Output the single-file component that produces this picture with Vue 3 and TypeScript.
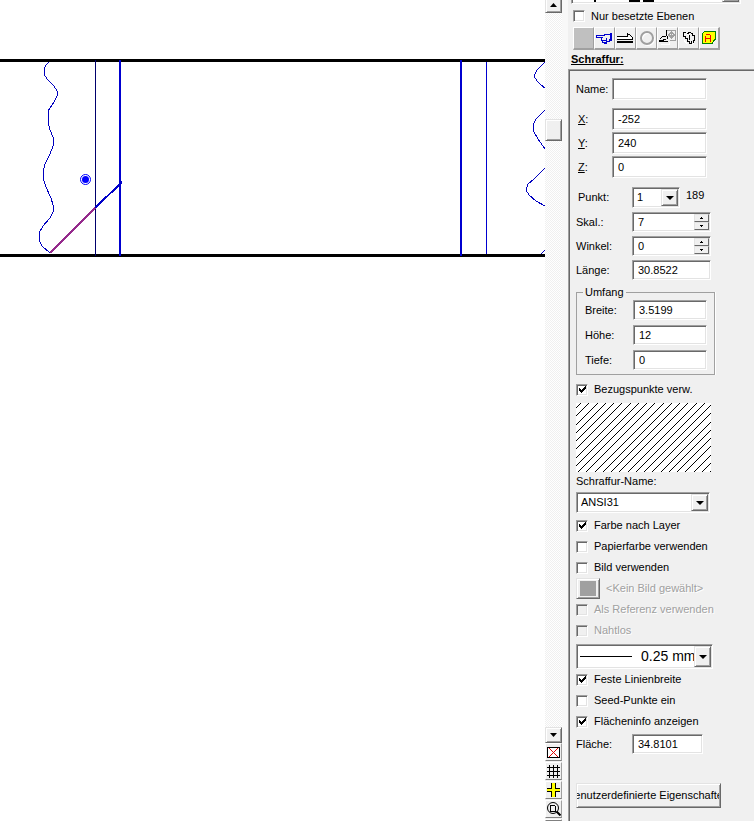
<script setup lang="ts">
import { reactive, ref } from 'vue'

interface Field { id: string; label: string; value: string }
interface Check { id: string; label: string; on: boolean; disabled?: boolean }

const name = ref('')
const coords = reactive<Field[]>([
  { id: 'x', label: 'X', value: '-252' },
  { id: 'y', label: 'Y', value: '240' },
  { id: 'z', label: 'Z', value: '0' },
])
const spins = reactive<Field[]>([
  { id: 'scale', label: 'Skal.:', value: '7' },
  { id: 'angle', label: 'Winkel:', value: '0' },
])
const extents = reactive<Field[]>([
  { id: 'width', label: 'Breite:', value: '3.5199' },
  { id: 'height', label: 'Höhe:', value: '12' },
  { id: 'depth', label: 'Tiefe:', value: '0' },
])
const length = ref('30.8522')
const area = ref('34.8101')
const onlyUsed = ref(false)
const useRefs = ref(true)
const fillChecks = reactive<Check[]>([
  { id: 'bylayer', label: 'Farbe nach Layer', on: true },
  { id: 'paper', label: 'Papierfarbe verwenden', on: false },
  { id: 'image', label: 'Bild verwenden', on: false },
])
const imageChecks = reactive<Check[]>([
  { id: 'asref', label: 'Als Referenz verwenden', on: false, disabled: true },
  { id: 'seamless', label: 'Nahtlos', on: false, disabled: true },
])
const lineChecks = reactive<Check[]>([
  { id: 'fixed', label: 'Feste Linienbreite', on: true },
  { id: 'seed', label: 'Seed-Punkte ein', on: false },
  { id: 'info', label: 'Flächeninfo anzeigen', on: true },
])

function step(field: Field, by: number) {
  field.value = String(Number(field.value) + by)
}

// 45° hatch strokes of the ANSI31 preview
const hatch = Array.from({ length: 26 }, (_, i) => Math.round(5 + i * 8.25))
</script>

<template>
  <div class="app">
    <main class="canvas">
      <svg class="drawing" aria-label="Zeichnung">
        <g shape-rendering="crispEdges" fill="none">
          <path d="M50 61L46 65L44 69V74L47 79L54 86L57 91V96L54 102L48 111V121L50 130L53 137V146L50 154L45 164L43 172V178L46 187L51 198L53 205V212L50 218L43 226L39 233V240L42 246L50 253" stroke="#0000c0" />
          <path d="M545 62L537 70L534 76L537 81L541 85L545 88M545 110L536 119L533 125L534 132L538 139L545 149M545 168L534 179L528 184L526 190L529 195L536 201L545 206M545 250L539 256" stroke="#0000c0" />
          <path d="M486.500 60V255" stroke="#0000d0" />
          <line x1="0" x2="100%" y1="60.500" y2="60.500" stroke="#000" stroke-width="3" />
          <line x1="0" x2="100%" y1="255.500" y2="255.500" stroke="#000" stroke-width="3" />
          <path d="M95.500 60V256" stroke="#00006c" />
          <path d="M120 60V256M461 60V256" stroke="#0000d0" stroke-width="2" />
          <path d="M95 208L122 182" stroke="#0000c8" stroke-width="2" />
          <path d="M50 253L95 208" stroke="#952a8c" stroke-width="2" />
        </g>
        <circle cx="85.500" cy="179.500" r="5" fill="#fff" stroke="#00f" />
        <circle cx="85.500" cy="179.500" r="3.500" fill="#00f" />
      </svg>
    </main>

    <div class="scroller">
      <button class="raised scroll-btn first" aria-label="Nach oben"><svg width="7" height="4"><path d="M0 4L3.500 0L7 4Z" /></svg></button>
      <div class="track before"></div>
      <button class="raised thumb" aria-label="Bildlauf"></button>
      <div class="track after"></div>
      <button class="raised scroll-btn" aria-label="Nach unten"><svg width="7" height="4"><path d="M0 0H7L3.500 4Z" /></svg></button>
      <button class="view-btn" aria-label="Schließen">
        <svg width="13" height="13" fill="none" shape-rendering="crispEdges"><path d="M.5 1.500H12.500V11.500H.5Z" stroke="#000" fill="#fff" /><path d="M2 2L11 11M11 2L2 11" stroke="#e00000" /></svg>
      </button>
      <button class="view-btn" aria-label="Raster">
        <svg width="13" height="13" fill="none" stroke="#000" shape-rendering="crispEdges"><path d="M2.500 0V13M6.500 0V13M10.500 0V13M0 2.500H13M0 6.500H13M0 10.500H13" /></svg>
      </button>
      <button class="view-btn" aria-label="Fang">
        <svg width="13" height="14" shape-rendering="crispEdges"><path d="M4 0H9V5H13V9H9V14H4V9H0V5H4Z" fill="#000" /><path d="M5 0H8V6H13V8H8V14H5V8H0V6H5Z" fill="#ff0" /></svg>
      </button>
      <button class="view-btn" aria-label="Zoom">
        <svg width="14" height="14" fill="none" stroke="#000"><circle cx="6" cy="6" r="5.500" /><path d="M9.500 9.500L13.500 13.500" stroke-width="2" /><path d="M3.500 3.500H7.500L8.500 4.500V9.500H3.500Z" shape-rendering="crispEdges" /></svg>
      </button>
      <div class="view-btn"></div>
    </div>
    <div class="gutter"></div>

    <aside class="side">
      <header class="head">
        <span class="combo layer">
          <select aria-label="Ebene"><option></option></select>
          <svg class="layer-mark" width="64" height="2"><path d="M0 0H2V2H0ZM35 0H46V2H35ZM49 0H60V2H49Z" /></svg>
          <i class="drop"></i>
        </span>
        <label class="check top">
          <span class="box"><input v-model="onlyUsed" type="checkbox" /><svg v-if="onlyUsed" width="7" height="7"><path d="M0 2L2 4L7 0V3L2 7L0 5Z" /></svg></span>
          Nur besetzte Ebenen
        </label>
        <nav class="tools">
          <button aria-label="Farbe" class="blank"></button>
          <button aria-label="Auswahl">
            <svg width="17" height="11" fill="none" stroke="#0000d0" shape-rendering="crispEdges"><path d="M0 2.500H8M0 4.500H7M8.500 1V3M9 1.500H14M5.500 5V7H10M6.500 7V9H10M8 10.500H11M10.500 5V10M11 8.500H13V6.500H16" /><path d="M15 0V8" stroke-width="2" /><path d="M0 3.500H1" /></svg>
          </button>
          <button aria-label="Richtung">
            <svg width="17" height="11" fill="none" shape-rendering="crispEdges"><path d="M0 3.500H11M10.500 0V3M11 1.500H13M13 2.500H14M14 3.500H15M15.500 4V6M0 6.500H16" stroke="#000" /><path d="M0 5H15" stroke="#fff" stroke-width="2" /><path d="M0 9H16" stroke="#000" stroke-width="2" /></svg>
          </button>
          <button aria-label="Kreis"><svg width="16" height="16" fill="none"><circle cx="9" cy="9" r="6" stroke="#fff" stroke-width="2" /><circle cx="8" cy="8" r="6" stroke="#a0a0a0" stroke-width="2" /></svg></button>
          <button aria-label="Teil">
            <svg width="17" height="16" fill="none" shape-rendering="crispEdges"><path d="M2 14.500H10V12" stroke="#fff" /><path d="M8 .5H16.500V10.500H11" stroke="#a0a0a0" /><path d="M12.500 2L15.500 5L12.500 8L9.500 5ZM12.500 3V7M11 5.500H14" stroke="#a0a0a0" /><path d="M7.500 0V6M7 6.500H3M3 7.500H2M1 8.500H2M0 10.500H5M8 6V9M7 9.500H4M0 11.500H9" stroke="#000" /></svg>
          </button>
          <button aria-label="Drehen">
            <svg width="14" height="15" fill="none" shape-rendering="crispEdges"><path d="M2 9L5 13M12 12L10 14M5 3L8 6" stroke="#fff" /><path d="M3.500 1H1.500V5H3.500V7H5.500M5 2.500H7M6.500 2V1.500H9M9 2.500H10V4.500H12.500V9H11.500V11.500M7.500 4V9M5.500 8V10H7.500V12.500H9.500V10" stroke="#000" /></svg>
          </button>
          <button aria-label="Beschriftung">
            <svg width="15" height="14" fill="none" shape-rendering="crispEdges"><path d="M2.500 .5H13.500V8.500L11.500 9.500L10.500 12.500H.5V2.500Z" fill="#ff0" stroke="#008000" /><path d="M3.500 11V4.500M4 3.500H8M8.500 4V11M4 7.500H8" stroke="#f00000" /></svg>
          </button>
        </nav>
        <h1>Schraffur:</h1>
      </header>

      <form class="inspector" @submit.prevent>
        <div class="row tall name"><label for="name">Name:</label><input id="name" v-model="name" class="field" type="text" /></div>
        <div class="stack coords">
          <div v-for="f in coords" :key="f.id" class="row tall">
            <label :for="f.id"><u>{{ f.label }}</u>:</label><input :id="f.id" v-model="f.value" class="field" type="text" />
          </div>
        </div>

        <div class="stack metrics">
          <div class="row">
            <label for="point" class="indent">Punkt:</label>
            <span class="combo point"><select id="point"><option>1</option></select><i class="drop"></i></span>
            <output class="count">189</output>
          </div>
          <div v-for="f in spins" :key="f.id" class="row">
            <label :for="f.id">{{ f.label }}</label>
            <span class="spin">
              <input :id="f.id" v-model="f.value" class="field" type="text" />
              <span class="arrows">
                <button type="button" aria-label="Erhöhen" @click="step(f, 1)"><svg width="3" height="2"><path d="M1 0H2V1H3V2H0V1H1Z" /></svg></button>
                <button type="button" aria-label="Verringern" @click="step(f, -1)"><svg width="3" height="2"><path d="M0 0H3V1H2V2H1V1H0Z" /></svg></button>
              </span>
            </span>
          </div>
          <div class="row"><label for="length">Länge:</label><input id="length" v-model="length" class="field" type="text" /></div>
        </div>

        <fieldset>
          <legend>Umfang</legend>
          <div class="stack">
            <div v-for="f in extents" :key="f.id" class="row">
              <label :for="f.id">{{ f.label }}</label><input :id="f.id" v-model="f.value" class="field" type="text" />
            </div>
          </div>
        </fieldset>

        <label class="check refs">
          <span class="box"><input v-model="useRefs" type="checkbox" /><svg v-if="useRefs" width="7" height="7"><path d="M0 2L2 4L7 0V3L2 7L0 5Z" /></svg></span>
          Bezugspunkte verw.
        </label>

        <svg class="hatch" width="135" height="69" shape-rendering="crispEdges" aria-label="Schraffurmuster">
          <path v-for="x in hatch" :key="x" :d="`M${x} 0L${x - 70} 70`" stroke="#000" />
        </svg>

        <label class="caption" for="pattern">Schraffur-Name:</label>
        <span class="combo pattern"><select id="pattern"><option>ANSI31</option></select><i class="drop"></i></span>

        <div class="checks">
          <label v-for="c in fillChecks" :key="c.id" class="check">
            <span class="box"><input v-model="c.on" type="checkbox" /><svg v-if="c.on" width="7" height="7"><path d="M0 2L2 4L7 0V3L2 7L0 5Z" /></svg></span>
            {{ c.label }}
          </label>
          <div class="picture"><button type="button" class="raised swatch" aria-label="Bild wählen" disabled><i></i></button><span>&lt;Kein Bild gewählt&gt;</span></div>
          <label v-for="c in imageChecks" :key="c.id" class="check off">
            <span class="box"><input v-model="c.on" type="checkbox" :disabled="c.disabled" /></span>
            {{ c.label }}
          </label>
        </div>

        <span class="combo weight">
          <select aria-label="Linienbreite"><option>0.25 mm</option></select>
          <i class="sample"></i><i class="drop"></i>
        </span>

        <div class="checks lines">
          <label v-for="c in lineChecks" :key="c.id" class="check">
            <span class="box"><input v-model="c.on" type="checkbox" /><svg v-if="c.on" width="7" height="7"><path d="M0 2L2 4L7 0V3L2 7L0 5Z" /></svg></span>
            {{ c.label }}
          </label>
        </div>

        <div class="row area"><label for="area">Fläche:</label><input id="area" v-model="area" class="field" type="text" /></div>
        <button type="button" class="raised custom"><span>Benutzerdefinierte Eigenschaften</span></button>
      </form>
    </aside>
  </div>
</template>

<style>
body { margin: 0; background: #fff; }
</style>

<style scoped>
.app {
  display: grid;
  grid-template-columns: minmax(0, 1fr) 17px 6px 186px;
  min-height: 100vh;
  font: 11px/13px "Liberation Sans", Arial, sans-serif;
  color: #000;
  overflow: hidden;
}
.app * { box-sizing: border-box; }
svg { display: block; }
button, input, select { font: inherit; color: inherit; margin: 0; padding: 0; border-radius: 0; }
.canvas { background: #fff; overflow: hidden; display: grid; }
.drawing { width: 100%; height: 100%; }

.raised, .drop {
  background: #f0f0f0;
  border: 1px solid;
  border-color: #e3e3e3 #696969 #696969 #e3e3e3;
  box-shadow: inset 1px 1px #fff, inset -1px -1px #a0a0a0;
}

.scroller { display: flex; flex-direction: column; height: 100vh; overflow: hidden; background: #f0f0f0; }
.scroll-btn { height: 16px; flex: none; display: grid; place-items: center; }
.scroll-btn.first { margin-top: -3px; }
.track { background: repeating-conic-gradient(#fff 0 25%, #f0f0f0 0 50%) 0 0 / 2px 2px; }
.before { flex: 106 1 0; }
.after { flex: 586 1 0; }
.thumb { height: 22px; flex: none; }
.view-btn {
  height: 18px;
  flex: none;
  display: grid;
  place-items: center;
  margin-bottom: 1px;
  background: #f0f0f0;
  border: 1px solid;
  border-color: #fff #a0a0a0 #808080 #fff;
}
.view-btn:last-child { height: 2px; margin: 0; }
.gutter { background: #f8f8f8; }

.side { display: flex; flex-direction: column; background: #f0f0f0; min-width: 0; }
.head { height: 69px; padding-left: 3px; overflow: hidden; flex: none; }
.tools { display: flex; margin-left: 2px; }
.tools button {
  width: 21px;
  height: 23px;
  display: grid;
  place-items: center;
  background: #f0f0f0;
  border: 1px solid;
  border-color: #fff #a0a0a0 #a0a0a0 #fff;
  border-bottom-width: 2px;
}
.tools .blank { background: #c0c0c0; }
.tools button:last-child { border-right-width: 2px; }
h1 { margin: 3px 0 0; font-size: 11px; line-height: 13px; font-weight: bold; text-decoration: underline; }

.inspector {
  flex: 1;
  display: flex;
  flex-direction: column;
  align-items: flex-start;
  padding: 7px 0 13px;
  padding-left: 7px;
  border-top: 1px solid #a0a0a0;
  border-left: 1px solid #a0a0a0;
  box-shadow: inset 1px 1px #696969;
}
.row { display: grid; grid-template-columns: 56px 79px auto; align-items: center; min-height: 20px; }
.row.tall { grid-template-columns: 36px 95px; }
.row.tall .field { height: 22px; }
.name { margin-top: 1px; }
.stack { display: grid; gap: 4px; }
.coords { gap: 2px; margin-top: 8px; }
.coords label, .indent { padding-left: 2px; }
.metrics { margin-top: 9px; }
.field {
  width: 100%;
  height: 20px;
  padding: 0 5px;
  background: #fff;
  border: 1px solid;
  border-color: #a0a0a0 #fff #fff #a0a0a0;
  box-shadow: inset 1px 1px #696969, inset -1px -1px #e3e3e3;
  outline: none;
}
.combo { position: relative; display: block; height: 21px; }
.combo select {
  width: 100%;
  height: 100%;
  display: block;
  appearance: none;
  padding: 0 4px;
  background: #fff;
  border: 1px solid;
  border-color: #a0a0a0 #fff #fff #a0a0a0;
  box-shadow: inset 1px 1px #696969, inset -1px -1px #e3e3e3;
  outline: none;
}
.drop { position: absolute; top: 2px; right: 2px; bottom: 2px; width: 17px; pointer-events: none; }
.drop::after {
  content: "";
  position: absolute;
  top: 6px;
  left: 4px;
  border: solid transparent;
  border-width: 4px 4px 0;
  border-top-color: #000;
}
.layer { width: 170px; margin: -17px 0 6px; }
.layer-mark { position: absolute; left: 23px; bottom: 2px; }
.point { width: 48px; }
.count { align-self: start; margin-top: 2px; margin-left: -25px; }
.spin { position: relative; display: block; }
.arrows { position: absolute; top: 2px; right: 2px; bottom: 2px; width: 15px; display: grid; }
.arrows button {
  display: grid;
  place-items: center;
  min-height: 0;
  background: #f0f0f0;
  border: 1px solid;
  border-color: #e3e3e3 #696969 #696969 #e3e3e3;
}

fieldset {
  width: 139px;
  margin: 6px 0 0;
  padding: 2px 8px 4px;
  border: 1px solid #a0a0a0;
  box-shadow: 1px 0 #fff;
  min-width: 0;
}
fieldset .stack { gap: 5px; }
legend { padding: 0 2px; margin-left: -2px; line-height: 12px; }
fieldset .row { grid-template-columns: 48px 74px; }

.check { display: flex; align-items: center; gap: 6px; height: 21px; white-space: nowrap; }
.check.top { height: 12px; margin: 0 0 5px; padding-left: 2px; }
.box { display: grid; place-items: center; width: 12px; height: 12px; }
.box > * { grid-area: 1 / 1; }
.box svg { pointer-events: none; shape-rendering: crispEdges; }
.box input {
  appearance: none;
  width: 12px;
  height: 12px;
  background: #fff;
  border: 1px solid;
  border-color: #a0a0a0 #fff #fff #a0a0a0;
  box-shadow: inset 1px 1px #696969, inset -1px -1px #e3e3e3;
}
.box input:disabled { background: #f0f0f0; }
.off, .picture { color: #a0a0a0; text-shadow: 1px 1px #fff; }
.refs { margin-top: 4px; }
.hatch { margin-top: 3px; background: #fff; }
.caption { line-height: 19px; }
.pattern { width: 134px; margin-top: 1px; }
.checks { margin-top: 2px; }
.picture { display: flex; align-items: center; gap: 6px; height: 21px; }
.swatch { width: 24px; height: 21px; display: grid; place-items: center; }
.swatch i { width: 16px; height: 15px; background: #a0a0a0; }
.weight { width: 137px; height: 25px; margin-top: 3px; }
.weight select { font-size: 14px; padding-left: 64px; }
.sample { position: absolute; left: 4px; top: 12px; width: 52px; height: 1px; background: #000; pointer-events: none; }
.weight .drop::after { top: 8px; }
.checks.lines { margin-top: 0; }
.area { margin-top: 2px; grid-template-columns: 56px 71px; }
.custom { width: 145px; height: 25px; margin-top: 29px; padding: 0 1px 0 0; }
.custom span { display: flex; justify-content: center; overflow: hidden; white-space: nowrap; }
</style>
